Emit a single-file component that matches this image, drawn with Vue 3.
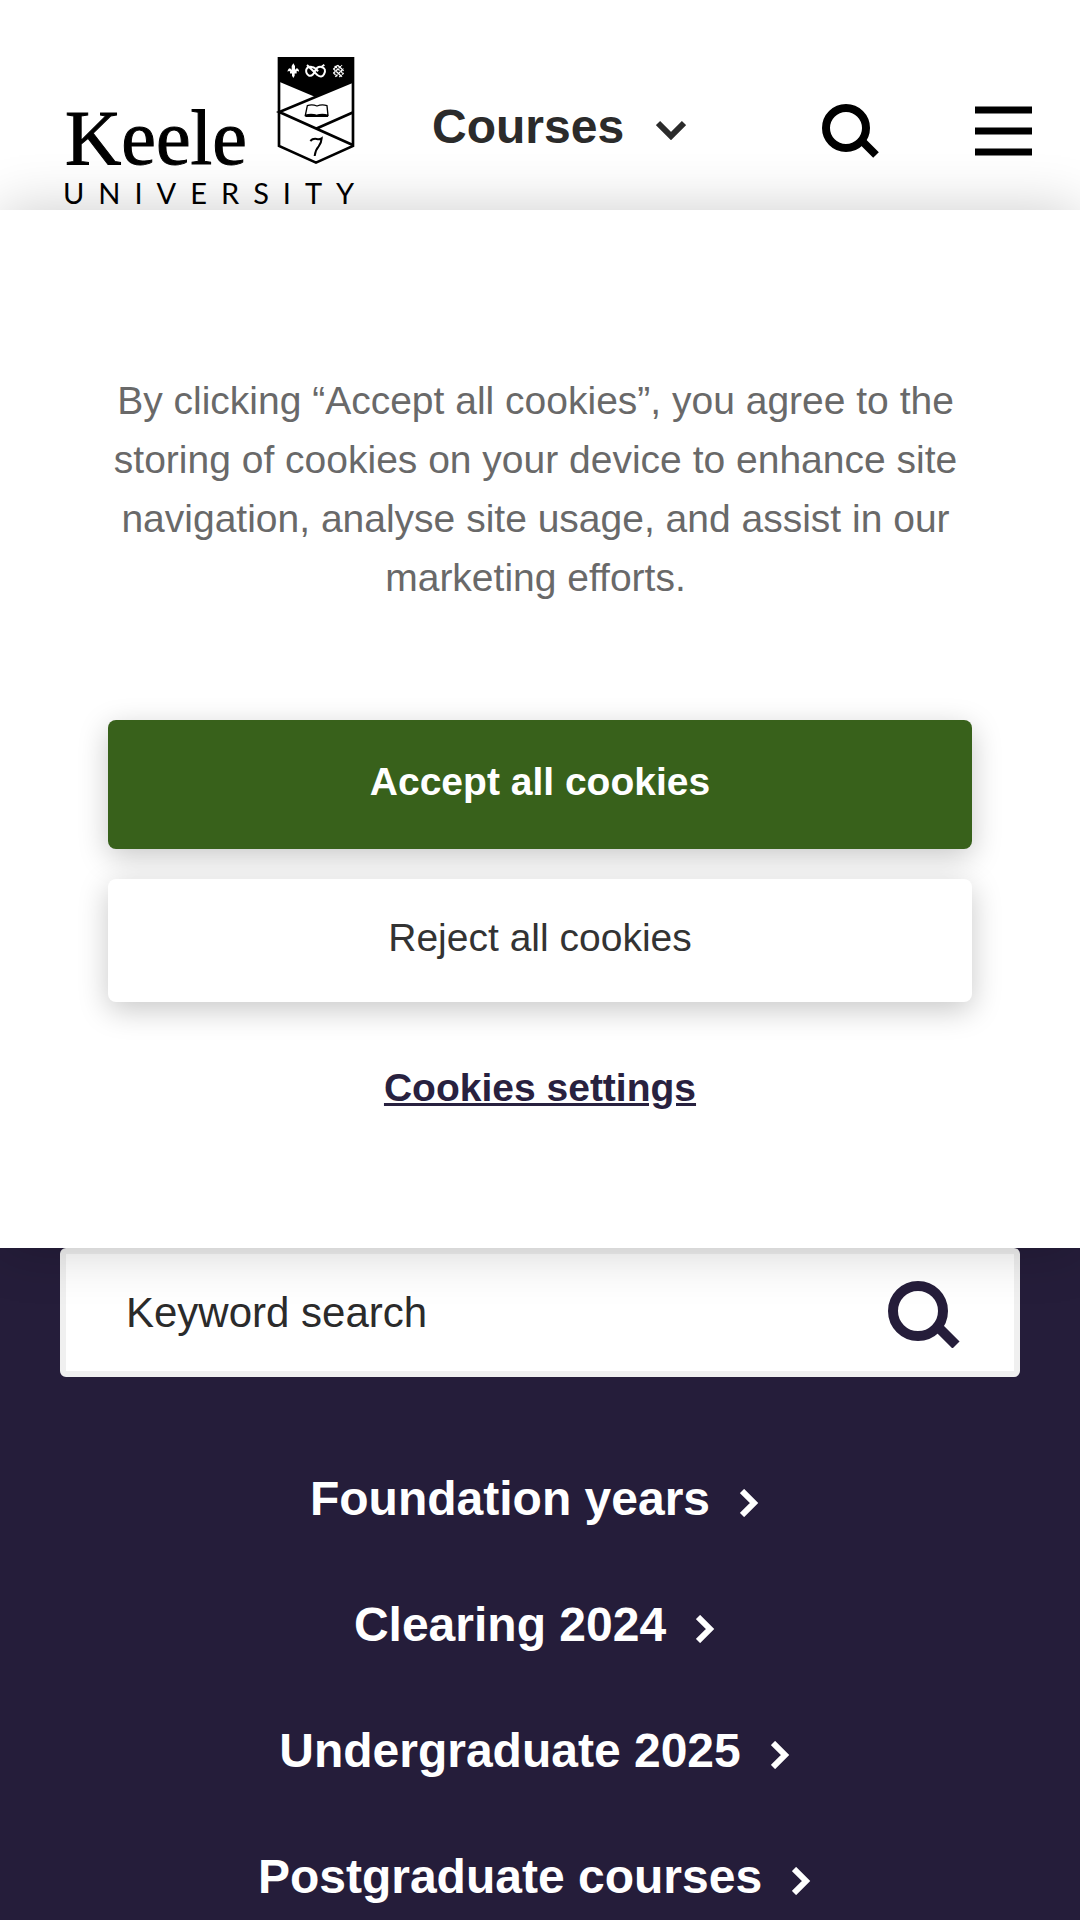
<template>
  <div class="page">
    <header class="site-header">
      <a href="#" class="logo" aria-label="Keele University home">
        <svg viewBox="0 0 320 160" width="320" height="160">
          <text class="logo-name" x="5" y="114">Keele</text>
          <text class="logo-sub" x="3" y="154">UNIVERSITY</text>
          <g transform="translate(210 0) scale(0.3333)">
            <path d="M27 25H249V288L138 338L27 288Z" fill="#fff" stroke="#000" stroke-width="8" />
            <path d="M24 21H252V94L138 142L24 94Z" fill="#000" />
            <path d="M250 94L28 186L250 286M138 236L250 187" fill="none" stroke="#000" stroke-width="8" />
            <!-- open book -->
            <path d="M112 167Q126 162 141 168Q156 162 171 167L174 196Q157 191 140 196Q123 191 106 196Z" fill="none" stroke="#000" stroke-width="4" />
            <path d="M106 196Q123 190 140 195Q157 190 174 196V201H106Z" fill="#000" />
            <path d="M121 273Q128 265 140 267Q149 269 155 265Q154 279 146 289Q136 300 134 318" fill="none" stroke="#000" stroke-width="6" />
            <!-- fleur-de-lis -->
            <path d="M70 40L75 48V60Q79 52 84 56Q88 60 87 66Q83 60 78 67H74V77L70 84L66 77V67H62Q57 60 53 66Q52 60 56 56Q61 52 65 60V48Z" fill="#fff" />
            <path d="M60 68H80" stroke="#fff" stroke-width="5" />
            <!-- knot -->
            <path d="M111 45L142 75Q155 85 162 73Q171 55 154 51Q143 48 136 61Q129 80 117 77Q106 71 109 58Q114 48 126 51Q136 52 144 64M154 51L163 44" fill="none" stroke="#fff" stroke-width="6" />
            <!-- fret -->
            <path d="M190 56L216 80M194 48L221 72M203 46L221 62M190 68L202 79M190 70L216 46M196 80L221 56M208 81L221 69M190 58L203 46" fill="none" stroke="#fff" stroke-width="4" stroke-dasharray="9 2" />
          </g>
        </svg>
      </a>

      <a href="#" class="section-link">
        <span>Courses</span>
        <svg viewBox="0 0 30 20" width="30" height="20">
          <path d="M2 3L15 16L28 3" fill="none" stroke="currentColor" stroke-width="6" />
        </svg>
      </a>

      <div class="tools">
        <button type="button" class="icon-button" aria-label="Search">
          <svg viewBox="0 0 57 54" width="57" height="54">
            <circle cx="24" cy="24" r="20" fill="none" stroke="currentColor" stroke-width="8" />
            <path d="M39 36L54 51" stroke="currentColor" stroke-width="8" />
          </svg>
        </button>
        <button type="button" class="icon-button" aria-label="Menu">
          <svg viewBox="0 0 57 50" width="57" height="50">
            <path d="M0 4H57M0 25H57M0 46H57" stroke="currentColor" stroke-width="7" />
          </svg>
        </button>
      </div>
    </header>

    <section class="cookies" role="dialog" aria-label="Cookies">
      <p>
        By clicking “Accept all cookies”, you agree to the storing of cookies on your device to
        enhance site navigation, analyse site usage, and assist in our marketing efforts.
      </p>
      <button type="button" class="choice accept">Accept all cookies</button>
      <button type="button" class="choice reject">Reject all cookies</button>
      <button type="button" class="settings">Cookies settings</button>
    </section>

    <main class="finder">
      <form class="search" @submit.prevent>
        <input v-model="keyword" type="text" placeholder="Keyword search" aria-label="Keyword search" />
        <button type="submit" class="icon-button" aria-label="Search courses">
          <svg viewBox="0 0 72 68" width="72" height="68">
            <circle cx="30" cy="31" r="25" fill="none" stroke="currentColor" stroke-width="10" />
            <path d="M49 46L68 65" stroke="currentColor" stroke-width="10" />
          </svg>
        </button>
      </form>

      <nav class="links" aria-label="Courses">
        <a v-for="link in links" :key="link" href="#">
          {{ link }}
          <svg viewBox="0 0 30 28" width="30" height="28">
            <path d="M2 2L14 14L2 26" fill="none" stroke="currentColor" stroke-width="6" />
          </svg>
        </a>
      </nav>
    </main>
  </div>
</template>

<script setup>
import { ref } from 'vue';

const keyword = ref('');

const links = [
  'Foundation years',
  'Clearing 2024',
  'Undergraduate 2025',
  'Postgraduate courses',
];
</script>

<style>
body {
  margin: 0;
  background: #251d3a;
}
</style>

<style scoped>
.page {
  display: flex;
  flex-direction: column;
  min-height: 100vh;
  overflow-x: hidden;
  font-family: "Liberation Sans", Arial, sans-serif;
}

.page * {
  box-sizing: border-box;
}

svg {
  display: block;
  flex: none;
}

button {
  font-family: inherit;
  border: 0;
  cursor: pointer;
}

.site-header {
  display: flex;
  align-items: center;
  padding: 50px 48px 0 60px;
  background: #fff;
}

.logo-name {
  font: 78px "Liberation Serif", serif;
  stroke: #000;
  stroke-width: 1px;
}

.logo-sub {
  font: 29px Lato, sans-serif;
  letter-spacing: 14px;
}

.section-link {
  display: flex;
  align-items: center;
  gap: 32px;
  margin-left: 52px;
  color: #2b2b2b;
  font-size: 48px;
  font-weight: bold;
  line-height: 56px;
  text-decoration: none;
}

.section-link span {
  padding-bottom: 6px;
}

.tools {
  display: flex;
  align-items: center;
  gap: 96px;
  margin-left: auto;
  padding-top: 2px;
}

.icon-button {
  padding: 0;
  background: none;
  color: #000;
}

.cookies {
  position: relative;
  z-index: 1;
  display: flex;
  flex-direction: column;
  align-items: center;
  padding: 161px 10% 135px;
  background: #fff;
  box-shadow: 0 0 54px rgba(0, 0, 0, 0.2);
  font-size: 39px;
}

.cookies p {
  margin: 0 0 113px;
  padding-right: 9px;
  color: #696969;
  line-height: 59px;
  text-align: center;
}

.choice {
  width: 100%;
  border-radius: 8px;
  font-size: 39px;
  line-height: 45px;
  box-shadow: 0 8px 30px rgba(0, 0, 0, 0.22);
}

.accept {
  padding: 39px 24px 45px;
  background: #38611b;
  color: #fff;
  font-weight: bold;
}

.reject {
  position: relative;
  margin-top: 30px;
  padding: 36px 24px 42px;
  background: #fff;
  color: #333;
}

.settings {
  margin-top: 61px;
  padding: 0;
  background: none;
  color: #28213f;
  font-size: 39px;
  font-weight: bold;
  line-height: 50px;
  text-decoration: underline;
}

.finder {
  flex: 1;
  padding: 0 60px 14px;
  background: #251d3a;
}

.search {
  display: flex;
  align-items: center;
  padding: 0 54px 0 60px;
  border: 6px solid #f0f0f0;
  border-radius: 6px;
  background: #fff;
}

.search input {
  flex: 1;
  min-width: 0;
  height: 117px;
  padding: 0;
  border: 0;
  outline: 0;
  background: none;
  color: #2b2b2b;
  font: 42px "Liberation Sans", Arial, sans-serif;
}

.search input::placeholder {
  color: #2b2b2b;
  opacity: 1;
}

.search .icon-button {
  padding-top: 2px;
  color: #251d3a;
}

.links {
  display: flex;
  flex-direction: column;
  align-items: center;
  gap: 70px;
  margin-top: 94px;
}

.links a {
  display: flex;
  align-items: center;
  gap: 30px;
  color: #fff;
  font-size: 48px;
  font-weight: bold;
  line-height: 56px;
  text-decoration: none;
}

.links svg {
  margin-top: 8px;
}
</style>
